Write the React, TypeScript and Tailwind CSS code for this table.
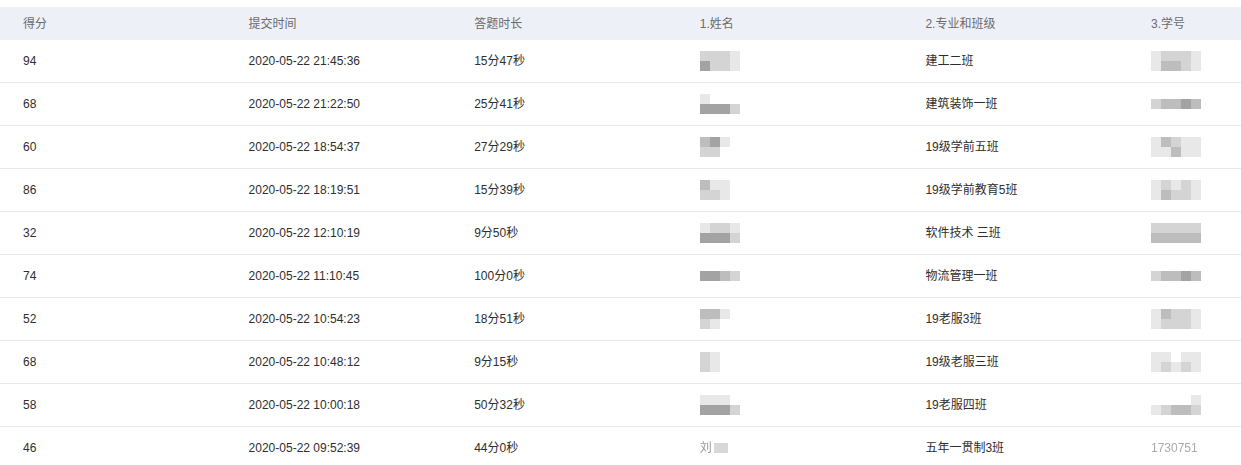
import React from "react";

const shade: Record<string, string> = {
  a: "bg-[#a3a3a3]",
  b: "bg-[#bdbdbd]",
  c: "bg-[#d4d4d4]",
  d: "bg-[#e8e8e8]",
  ".": "bg-transparent",
};

type Row = {
  score: string;
  time: string;
  spent: string;
  name: string[];
  major: string;
  id: string[] | null;
};

const rows: Row[] = [
  { score: "94", time: "2020-05-22 21:45:36", spent: "15分47秒", name: ["cccd", "accd"], major: "建工二班", id: ["dcccd", "dbbcd"] },
  { score: "68", time: "2020-05-22 21:22:50", spent: "25分41秒", name: ["d...", "aaac"], major: "建筑装饰一班", id: ["cbbab"] },
  { score: "60", time: "2020-05-22 18:54:37", spent: "27分29秒", name: ["bad", "cc."], major: "19级学前五班", id: ["dbcdd", "ddbdd"] },
  { score: "86", time: "2020-05-22 18:19:51", spent: "15分39秒", name: ["bdd", "ccd"], major: "19级学前教育5班", id: ["dcdcd", "dbccd"] },
  { score: "32", time: "2020-05-22 12:10:19", spent: "9分50秒", name: ["dccd", "aaac"], major: "软件技术 三班", id: ["ccccc", "bbbbb"] },
  { score: "74", time: "2020-05-22 11:10:45", spent: "100分0秒", name: ["aabc"], major: "物流管理一班", id: ["cbbab"] },
  { score: "52", time: "2020-05-22 10:54:23", spent: "18分51秒", name: ["bbd", "cd."], major: "19老服3班", id: ["dbccd", "dcccd"] },
  { score: "68", time: "2020-05-22 10:48:12", spent: "9分15秒", name: ["cd.", "cd."], major: "19级老服三班", id: ["dd.dd", "dcdcd"] },
  { score: "58", time: "2020-05-22 10:00:18", spent: "50分32秒", name: ["ddd.", "aaac"], major: "19老服四班", id: ["....d", "dcbbc"] },
  { score: "46", time: "2020-05-22 09:52:39", spent: "44分0秒", name: [], major: "五年一贯制3班", id: null },
];

function Pixels({ pattern }: { pattern: string[] }) {
  return (
    <div className="flex flex-col">
      {pattern.map((line, i) => (
        <div key={i} className="flex">
          {line.split("").map((ch, j) => (
            <div key={j} className={`h-[10px] w-[10px] ${shade[ch]}`} />
          ))}
        </div>
      ))}
    </div>
  );
}

const headers = ["得分", "提交时间", "答题时长", "1.姓名", "2.专业和班级", "3.学号"];
const cell = "pl-[23px] flex items-center";

export default function App() {
  return (
    <div
      className="w-[1241px] h-[465px] overflow-hidden bg-white text-[12px] text-[#2e2e2e]"
      style={{ fontFamily: '"Liberation Sans", "Noto Sans CJK SC", sans-serif' }}
    >
      <div className="mt-[7px] w-[1354px]">
        <div className="grid grid-cols-[repeat(6,225.6px)] h-[33px] bg-[#eef0f8] text-[#6b6b6b]">
          {headers.map((h) => (
            <div key={h} className={cell}>
              {h}
            </div>
          ))}
        </div>
        {rows.map((r, i) => (
          <div
            key={i}
            className="grid grid-cols-[repeat(6,225.6px)] h-[43px] border-b border-[#e8e9ee]"
          >
            <div className={cell}>{r.score}</div>
            <div className={cell}>{r.time}</div>
            <div className={cell}>{r.spent}</div>
            <div className={cell}>
              {r.name.length ? (
                <Pixels pattern={r.name} />
              ) : (
                <div className="flex items-center">
                  <span className="text-[#9a9a9a] blur-[0.6px]">刘</span>
                  <div className="h-[10px] w-[14px] bg-[#d8d8d8] ml-[2px]" />
                </div>
              )}
            </div>
            <div className={cell}>{r.major}</div>
            <div className={cell}>
              {r.id ? (
                <Pixels pattern={r.id} />
              ) : (
                <span className="text-[#aaa] blur-[0.4px]">1730751</span>
              )}
            </div>
          </div>
        ))}
      </div>
    </div>
  );
}
